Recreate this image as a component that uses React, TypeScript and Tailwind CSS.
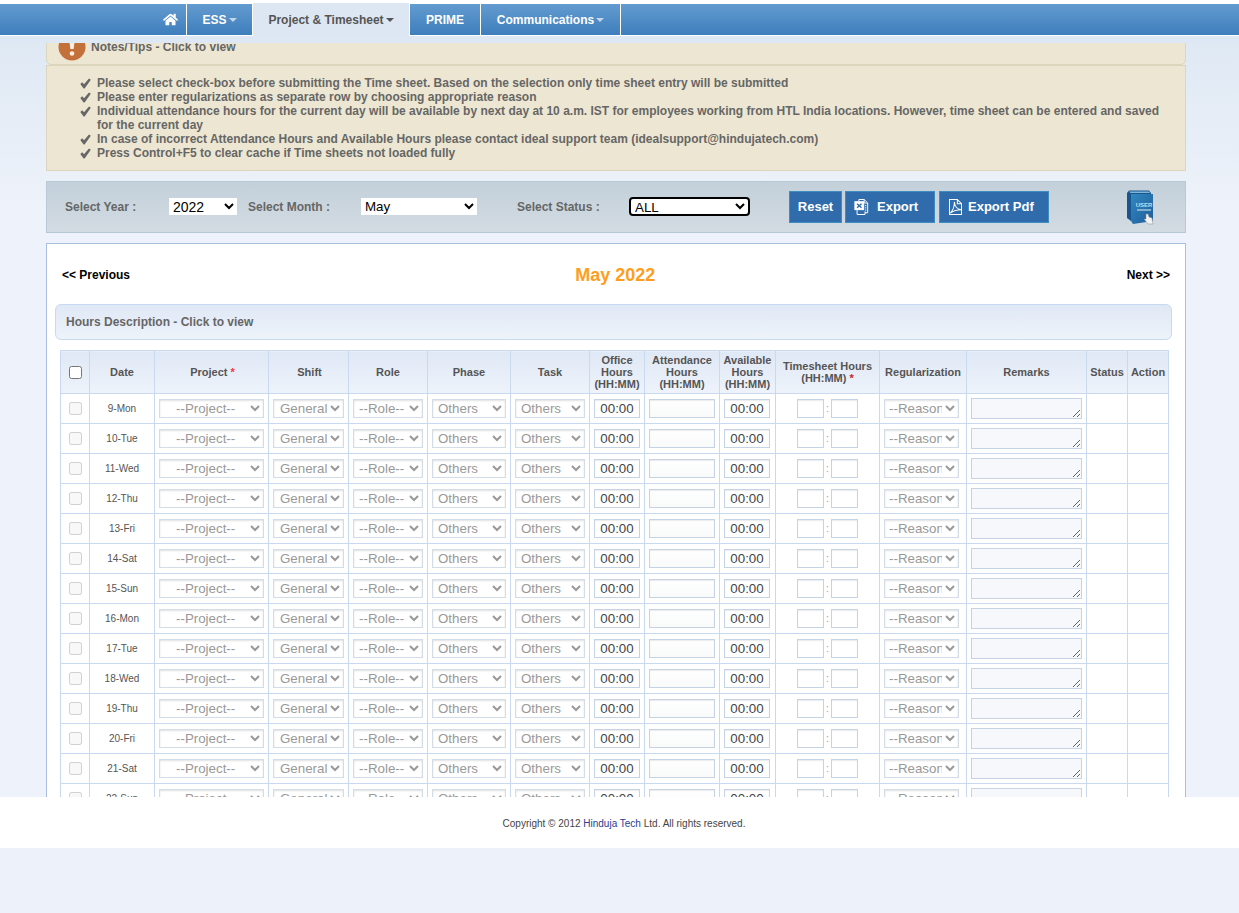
import React from 'react';
import { FaHome } from 'react-icons/fa';

const days = ['9-Mon', '10-Tue', '11-Wed', '12-Thu', '13-Fri', '14-Sat', '15-Sun', '16-Mon', '17-Tue', '18-Wed', '19-Thu', '20-Fri', '21-Sat', '22-Sun'];

const notes = [
    'Please select check-box before submitting the Time sheet. Based on the selection only time sheet entry will be submitted',
    'Please enter regularizations as separate row by choosing appropriate reason',
    'Individual attendance hours for the current day will be available by next day at 10 a.m. IST for employees working from HTL India locations. However, time sheet can be entered and saved for the current day',
    'In case of incorrect Attendance Hours and Available Hours please contact ideal support team (idealsupport@hindujatech.com)',
    'Press Control+F5 to clear cache if Time sheets not loaded fully',
];

const th = 'border border-[#c9daf0] bg-linear-to-b from-[#dfe8f5] to-[#eef3fb] text-[11px] leading-[12px] font-bold text-[#555] text-center p-0';
const td = 'border border-[#c9daf0] text-center p-0 align-middle';
const fieldBase = 'block ml-[4px] h-[19px] border border-[#d3dde8] bg-white text-[13.333px] leading-[15px] text-[#999] shadow-[inset_0_1px_2px_rgba(0,0,0,0.12)]';
const inputBase = 'h-[19px] border border-[#c6d3e3] text-[13.333px] text-center text-[#444] shadow-[inset_0_1px_1px_rgba(0,0,0,0.08)]';

const Caret = () => <span className="inline-block ml-[2px] align-middle border-x-[4px] border-t-[4px] border-x-transparent border-t-[#c3d6ea]" />;

const RowSelect = ({ label, className }: { label: string; className: string }) => (
    <select disabled defaultValue={label} className={`${fieldBase} ${className}`}>
        <option>{label}</option>
    </select>
);

const NavItem = ({ label, caret, active, className }: { label: string; caret?: boolean; active?: boolean; className: string }) => (
    <div
        className={`flex items-center justify-center border-r border-white text-[12px] font-bold ${className} ${active ? 'bg-[#dce7f3] text-[#555] h-[33px] -mt-[1px] -mb-[1px]' : 'text-white'}`}
    >
        {label}
        {caret && (active
            ? <span className="inline-block ml-[2px] border-x-[4px] border-t-[4px] border-x-transparent border-t-[#555]" />
            : <Caret />)}
    </div>
);

const AlertIcon = () => (
    <svg width="28" height="28" viewBox="0 0 28 28" className="shrink-0">
        <circle cx="14" cy="14" r="13.5" fill="#c4703a" />
        <path d="M10.5 2 L17.5 2 L15.6 16 L12.4 16 Z" fill="#f7efe6" />
        <circle cx="14" cy="20.5" r="2.3" fill="#f7efe6" />
    </svg>
);

const CheckIcon = () => (
    <svg width="11" height="11" viewBox="0 0 11 11" className="mt-[2px] shrink-0">
        <path d="M0.3 6 L2.2 4.2 L4 6.2 L9 0.6 L10.8 1.8 L4.6 10.4 L3.6 10.4 Z" fill="#666" />
    </svg>
);

const BookIcon = () => (
    <svg width="29" height="35" viewBox="0 0 29 35">
        <defs>
            <linearGradient id="bookFace" x1="0" y1="0" x2="1" y2="1">
                <stop offset="0" stopColor="#3288c0" />
                <stop offset="1" stopColor="#1e5c9a" />
            </linearGradient>
        </defs>
        <path d="M1 3 L3 0.5 L23 0.5 L25 3 L25 5 L5 5 L5 31 L1 28 Z" fill="#1a5590" />
        <path d="M3 1.5 L23 1.5 L24 3 L4.5 3 Z" fill="#7db6d8" />
        <path d="M5 4 L27 4 L27 31 L7 34 L5 31 Z" fill="url(#bookFace)" />
        <text x="18" y="17" fontSize="6" fontWeight="bold" fill="#c3dcec" textAnchor="middle" fontFamily="Liberation Sans">USER</text>
        <rect x="11" y="19" width="14" height="2" fill="#7fb0d2" />
        <path d="M20 24 L22 24 L23 27 L26 28 L27 34 L22 34 L18 29 L20 29 Z" fill="#f2f2f2" stroke="#8a8a8a" strokeWidth="0.5" />
    </svg>
);

const ExcelIcon = () => (
    <svg width="15" height="16" viewBox="0 0 17 18" fill="none" stroke="white" strokeWidth="1.1" className="shrink-0">
        <path d="M5.5 2.5 V0.5 H11.5 L15.5 4.5 V15.5 H12.5" />
        <path d="M11.5 0.5 V4.5 H15.5" />
        <rect x="1" y="3" width="10" height="9" fill="white" />
        <path d="M3.5 5.2 L8.5 9.8 M8.5 5.2 L3.5 9.8" stroke="#306cab" strokeWidth="1.6" />
        <path d="M3.5 12.5 V17.5 H12.5 V14" />
        <path d="M12.5 7.5 H14 M12.5 10 H14 M12.5 12.5 H14" />
    </svg>
);

const PdfIcon = () => (
    <svg width="13" height="16" viewBox="0 0 14 17" fill="none" stroke="white" strokeWidth="1.1" className="shrink-0">
        <path d="M0.5 0.5 H9 L13.5 5 V16.5 H0.5 Z" />
        <path d="M9 0.5 V5 H13.5" />
        <path d="M1.5 15 C4 12.5 6 7 5.8 3 C6 7.5 9 11 13 11.5 C9 11.5 5 12.5 1.5 15 Z" strokeWidth="1.2" />
    </svg>
);

export default function App() {
    return (
        <div className="w-[1239px] h-[913px] overflow-hidden bg-[#edf1f9] font-['Liberation_Sans',Arial,sans-serif]">
            {/* top menu */}
            <div className="bg-white pt-[4px]">
                <div className="flex h-[31px] pl-[162px] bg-linear-to-b from-[#639bd0] to-[#3d7ebc]">
                    <div className="w-[25px] flex items-center pl-[1px] border-r border-white text-white">
                        <FaHome className="w-[15px] h-[15px]" />
                    </div>
                    <NavItem label="ESS" caret className="w-[66px]" />
                    <NavItem label="Project & Timesheet" caret active className="w-[157px]" />
                    <NavItem label="PRIME" className="w-[71px]" />
                    <NavItem label="Communications" caret className="w-[140px]" />
                </div>
                <div className="h-[1px] bg-white" />
                <div className="h-[7px] bg-[#dde8f4]" />
            </div>

            {/* scrolled page content */}
            <div className="h-[754px] overflow-hidden px-[46px] bg-linear-to-b from-[#dfe9f4] via-[#eef2fa] via-[22%] to-[#eef2fa]">
                <div className="w-[1140px] -mt-[13px] pb-10">
                    <div className="flex items-center gap-[5px] h-[35px] pb-[2px] pl-[11px] bg-[#ede6d2] border border-[#ddd6bd] rounded-b-[5px] text-[12px] font-bold text-[#666]">
                        <AlertIcon />
                        <span>Notes/Tips - Click to view</span>
                    </div>
                    <ul className="h-[106px] bg-[#ede6d2] border border-[#ddd6bd] pt-[10px] pl-[33px] pr-[20px] text-[12px] leading-[14px] font-bold text-[#666]">
                        {notes.map((note) => (
                            <li key={note} className="flex gap-[6px]">
                                <CheckIcon />
                                <span>{note}</span>
                            </li>
                        ))}
                    </ul>

                    <div className="mt-[10px] h-[52px] flex items-center pl-[18px] bg-linear-to-b from-[#c3d0da] to-[#d3dbe3] border border-[#b7c8d6] text-[12px] font-bold text-[#666]">
                        <span className="w-[104px]">Select Year :</span>
                        <select defaultValue="2022" className="w-[68px] h-[17px] mb-[1px] bg-white text-[14px] font-normal text-black">
                            <option>2022</option>
                        </select>
                        <span className="w-[113px] ml-[11px]">Select Month :</span>
                        <select defaultValue="May" className="w-[116px] h-[17px] mb-[1px] bg-white text-[13.333px] font-normal text-black">
                            <option>May</option>
                        </select>
                        <span className="w-[112px] ml-[40px]">Select Status :</span>
                        <select defaultValue="ALL" className="w-[121px] h-[19px] mb-[1px] bg-white border-2 border-black rounded-[4px] text-[13.333px] font-normal text-black">
                            <option>ALL</option>
                        </select>
                        <button className="ml-[39px] w-[53px] h-[32px] bg-[#306cab] border border-[#3f8cc0] text-white text-[13px] font-bold">Reset</button>
                        <button className="ml-[3px] w-[90px] h-[32px] pl-[8px] flex items-center gap-[8px] bg-[#306cab] border border-[#3f8cc0] text-white text-[13px] font-bold">
                            <ExcelIcon />
                            Export
                        </button>
                        <button className="ml-[4px] w-[110px] h-[32px] pl-[9px] flex items-center gap-[6px] bg-[#306cab] border border-[#3f8cc0] text-white text-[13px] font-bold">
                            <PdfIcon />
                            Export Pdf
                        </button>
                        <div className="ml-[77px]"><BookIcon /></div>
                    </div>

                    <div className="mt-[10px] bg-white border border-[#a9bfe0] pl-[8px] pr-[13px]">
                        <div className="flex items-center justify-between h-[60px] pt-[2px] pl-[7px] pr-[2px] text-[12px] font-bold text-black">
                            <span>&lt;&lt; Previous</span>
                            <span className="mr-[26px] text-[18px] text-[#ff9e1b]">May 2022</span>
                            <span>Next &gt;&gt;</span>
                        </div>
                        <div className="h-[36px] flex items-center pl-[10px] border border-[#c9daf0] rounded-[6px] bg-linear-to-b from-[#dfe8f5] to-[#eef3fb] text-[12px] font-bold text-[#666] w-[1117px]">
                            Hours Description - Click to view
                        </div>
                        <table className="mt-[10px] ml-[5px] w-[1108px] table-fixed border-collapse">
                            <colgroup>
                                <col className="w-[29px]" />
                                <col className="w-[65px]" />
                                <col className="w-[114px]" />
                                <col className="w-[80px]" />
                                <col className="w-[79px]" />
                                <col className="w-[83px]" />
                                <col className="w-[79px]" />
                                <col className="w-[55px]" />
                                <col className="w-[75px]" />
                                <col className="w-[56px]" />
                                <col className="w-[104px]" />
                                <col className="w-[87px]" />
                                <col className="w-[120px]" />
                                <col className="w-[41px]" />
                                <col className="w-[41px]" />
                            </colgroup>
                            <thead>
                                <tr className="h-[43px]">
                                    <th className={th}><input type="checkbox" className="block mx-auto w-[13px] h-[13px]" /></th>
                                    <th className={th}>Date</th>
                                    <th className={`${th} pl-[2px]`}>Project <span className="text-[#f33]">*</span></th>
                                    <th className={`${th} pl-[2px]`}>Shift</th>
                                    <th className={th}>Role</th>
                                    <th className={th}>Phase</th>
                                    <th className={th}>Task</th>
                                    <th className={th}>Office Hours (HH:MM)</th>
                                    <th className={th}>Attendance Hours (HH:MM)</th>
                                    <th className={th}>Available Hours (HH:MM)</th>
                                    <th className={th}>Timesheet Hours (HH:MM) <span className="text-[#c22]">*</span></th>
                                    <th className={th}>Regularization</th>
                                    <th className={th}>Remarks</th>
                                    <th className={th}>Status</th>
                                    <th className={th}>Action</th>
                                </tr>
                            </thead>
                            <tbody>
                                {days.map((day) => (
                                    <tr key={day} className="h-[30px]">
                                        <td className={td}><input type="checkbox" disabled className="block mx-auto w-[13px] h-[13px]" /></td>
                                        <td className={`${td} text-[10px] text-[#555]`}>{day}</td>
                                        <td className={td}><RowSelect label="--Project--" className="w-[105px] pl-[12px]" /></td>
                                        <td className={td}><RowSelect label="General" className="w-[71px] pl-[2px]" /></td>
                                        <td className={td}><RowSelect label="--Role--" className="w-[70px] pl-[1px]" /></td>
                                        <td className={td}><RowSelect label="Others" className="w-[74px] pl-[1px]" /></td>
                                        <td className={td}><RowSelect label="Others" className="w-[70px] pl-[1px]" /></td>
                                        <td className={td}><input readOnly value="00:00" className={`${inputBase} block ml-[4px] w-[46px]`} /></td>
                                        <td className={td}><input readOnly value="" className={`${inputBase} block ml-[4px] w-[66px] bg-linear-to-b from-white to-[#f9fafa]`} /></td>
                                        <td className={td}><input readOnly value="00:00" className={`${inputBase} block ml-[4px] w-[46px]`} /></td>
                                        <td className={td}>
                                            <div className="flex items-center justify-center gap-[2.6px] text-[10px] text-[#999]">
                                                <input readOnly value="" className={`${inputBase} w-[27px]`} />
                                                <span>:</span>
                                                <input readOnly value="" className={`${inputBase} w-[27px]`} />
                                            </div>
                                        </td>
                                        <td className={td}><RowSelect label="--Reason--" className="w-[75px]" /></td>
                                        <td className={td}>
                                            <textarea readOnly className="block ml-[4px] w-[111px] h-[21px] border border-[#c6d3e3] bg-[#f6f8fb]" />
                                        </td>
                                        <td className={td} />
                                        <td className={td} />
                                    </tr>
                                ))}
                            </tbody>
                        </table>
                    </div>
                </div>
            </div>

            <div className="h-[51px] pt-[2px] pl-[9px] bg-white flex items-center justify-center gap-[2.8px] text-[10px] text-[#444]">
                <span>Copyright © 2012</span>
                <span className="text-[#27408f]">Hinduja Tech</span>
                <span>Ltd. All rights reserved.</span>
            </div>
        </div>
    );
}
